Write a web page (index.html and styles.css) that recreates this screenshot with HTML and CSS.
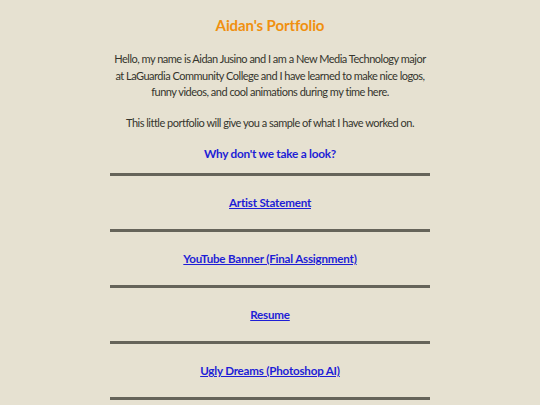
FILE: index.html
```html
<!DOCTYPE html>
<html lang="en">
<head>
<meta charset="utf-8">
<title>Aidan's Portfolio</title>
<link rel="stylesheet" href="styles.css">
</head>
<body>
<main class="page">
  <h1 class="title">Aidan's Portfolio</h1>
  <p class="intro">Hello, my name is Aidan Jusino and I am a New Media Technology major<br>at LaGuardia Community College and I have learned to make nice logos,<br>funny videos, and cool animations during my time here.</p>
  <p class="intro second">This little portfolio will give you a sample of what I have worked on.</p>
  <h2 class="look">Why don't we take a look?</h2>
  <nav class="links">
    <div class="item"><a href="#">Artist Statement</a></div>
    <div class="item"><a href="#">YouTube Banner (Final Assignment)</a></div>
    <div class="item"><a href="#">Resume</a></div>
    <div class="item"><a href="#">Ugly Dreams (Photoshop AI)</a></div>
    <div class="end"></div>
  </nav>
</main>
</body>
</html>
```
FILE: styles.css
```css
html, body {
  margin: 0;
  padding: 0;
  background: #e6e1d1;
}
body {
  font-family: "Lato", "Noto Sans", sans-serif;
}
.page {
  width: 320px;
  margin: 0 auto;
  padding-top: 15px;
  text-align: center;
}
.title {
  margin: 0;
  font-size: 15px;
  line-height: 20px;
  letter-spacing: -0.1px;
  font-weight: 700;
  color: #f0900f;
}
.intro {
  margin: 16px -10px 0;
  font-size: 11px;
  line-height: 16.5px;
  letter-spacing: -0.5px;
  color: #35352d;
  white-space: nowrap;
}
.intro.second {
  margin-top: 14px;
}
.look {
  margin: 14px 0 0;
  font-size: 11.8px;
  line-height: 18px;
  letter-spacing: -0.25px;
  font-weight: 700;
  color: #1e1ed6;
}
.links {
  margin-top: 10px;
}
.item {
  border-top: 3px solid #66645a;
  padding: 18px 0 17px;
  font-size: 11.6px;
  line-height: 18px;
  letter-spacing: -0.2px;
}
.item a {
  color: #1e1ed6;
  font-weight: 700;
  text-decoration: underline;
}
.end {
  border-top: 3px solid #66645a;
}
```
